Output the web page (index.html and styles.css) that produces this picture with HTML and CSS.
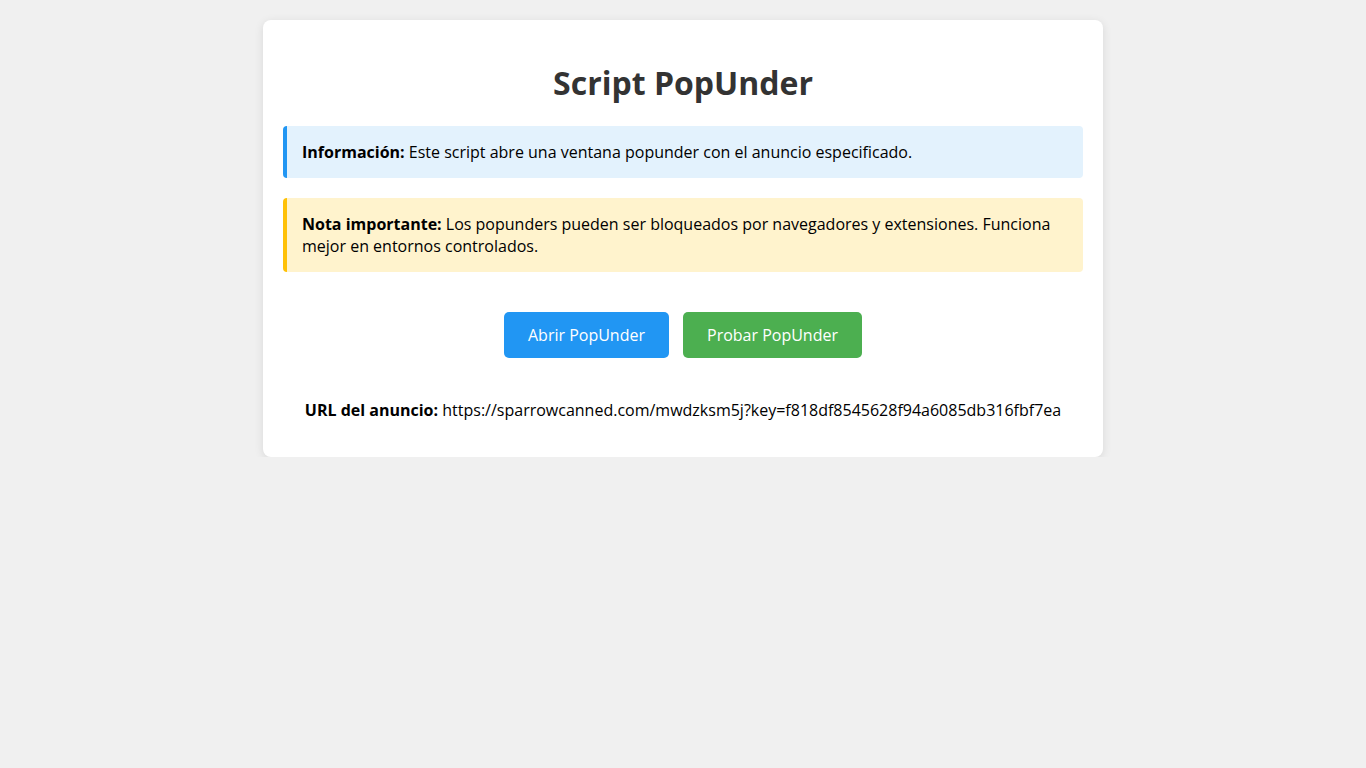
FILE: index.html
```html
<!DOCTYPE html>
<html lang="es">
<head>
<meta charset="utf-8">
<title>Script PopUnder</title>
<link rel="stylesheet" href="styles.css">
</head>
<body>
<div class="container">
  <h1 class="title">Script PopUnder</h1>
  <div class="box info"><strong>Información:</strong> Este script abre una ventana popunder con el anuncio especificado.</div>
  <div class="box warning"><strong>Nota importante:</strong> Los popunders pueden ser bloqueados por navegadores y extensiones. Funciona mejor en entornos controlados.</div>
  <div class="actions">
    <button class="btn btn-blue">Abrir PopUnder</button>
    <button class="btn btn-green">Probar PopUnder</button>
  </div>
  <p class="url"><strong>URL del anuncio:</strong> https://sparrowcanned.com/mwdzksm5j?key=f818df8545628f94a6085db316fbf7ea</p>
</div>
</body>
</html>
```

FILE: styles.css
```css
html, body {
  margin: 0;
  padding: 0;
}
body {
  background: #f0f0f0;
  font-family: "Open Sans", "Liberation Sans", sans-serif;
  font-size: 16px;
  color: #000;
  padding-top: 20px;
}
.container {
  width: 800px;
  margin: 0 auto;
  background: #fff;
  padding: 20px;
  border-radius: 8px;
  box-shadow: 0 2px 10px rgba(0, 0, 0, 0.1);
}
.title {
  text-align: center;
  color: #333;
  font-size: 32px;
  font-weight: 700;
  margin: 21.44px 0;
}
.box {
  padding: 15px;
  border-radius: 4px;
  margin: 20px 0;
}
.info {
  background: #e3f2fd;
  border-left: 4px solid #2196f3;
}
.warning {
  background: #fff3cd;
  border-left: 4px solid #ffc107;
}
.actions {
  display: flex;
  justify-content: center;
  gap: 14px;
  margin: 40px 0 41px;
}
.btn {
  font-family: "Open Sans", "Liberation Sans", sans-serif;
  font-size: 16px;
  color: #fff;
  border: none;
  border-radius: 5px;
  padding: 12px 24px;
  line-height: normal;
  cursor: pointer;
}
.btn-blue { background: #2196f3; }
.btn-green { background: #4caf50; }
.url {
  text-align: center;
  margin: 16px 0;
}
```
